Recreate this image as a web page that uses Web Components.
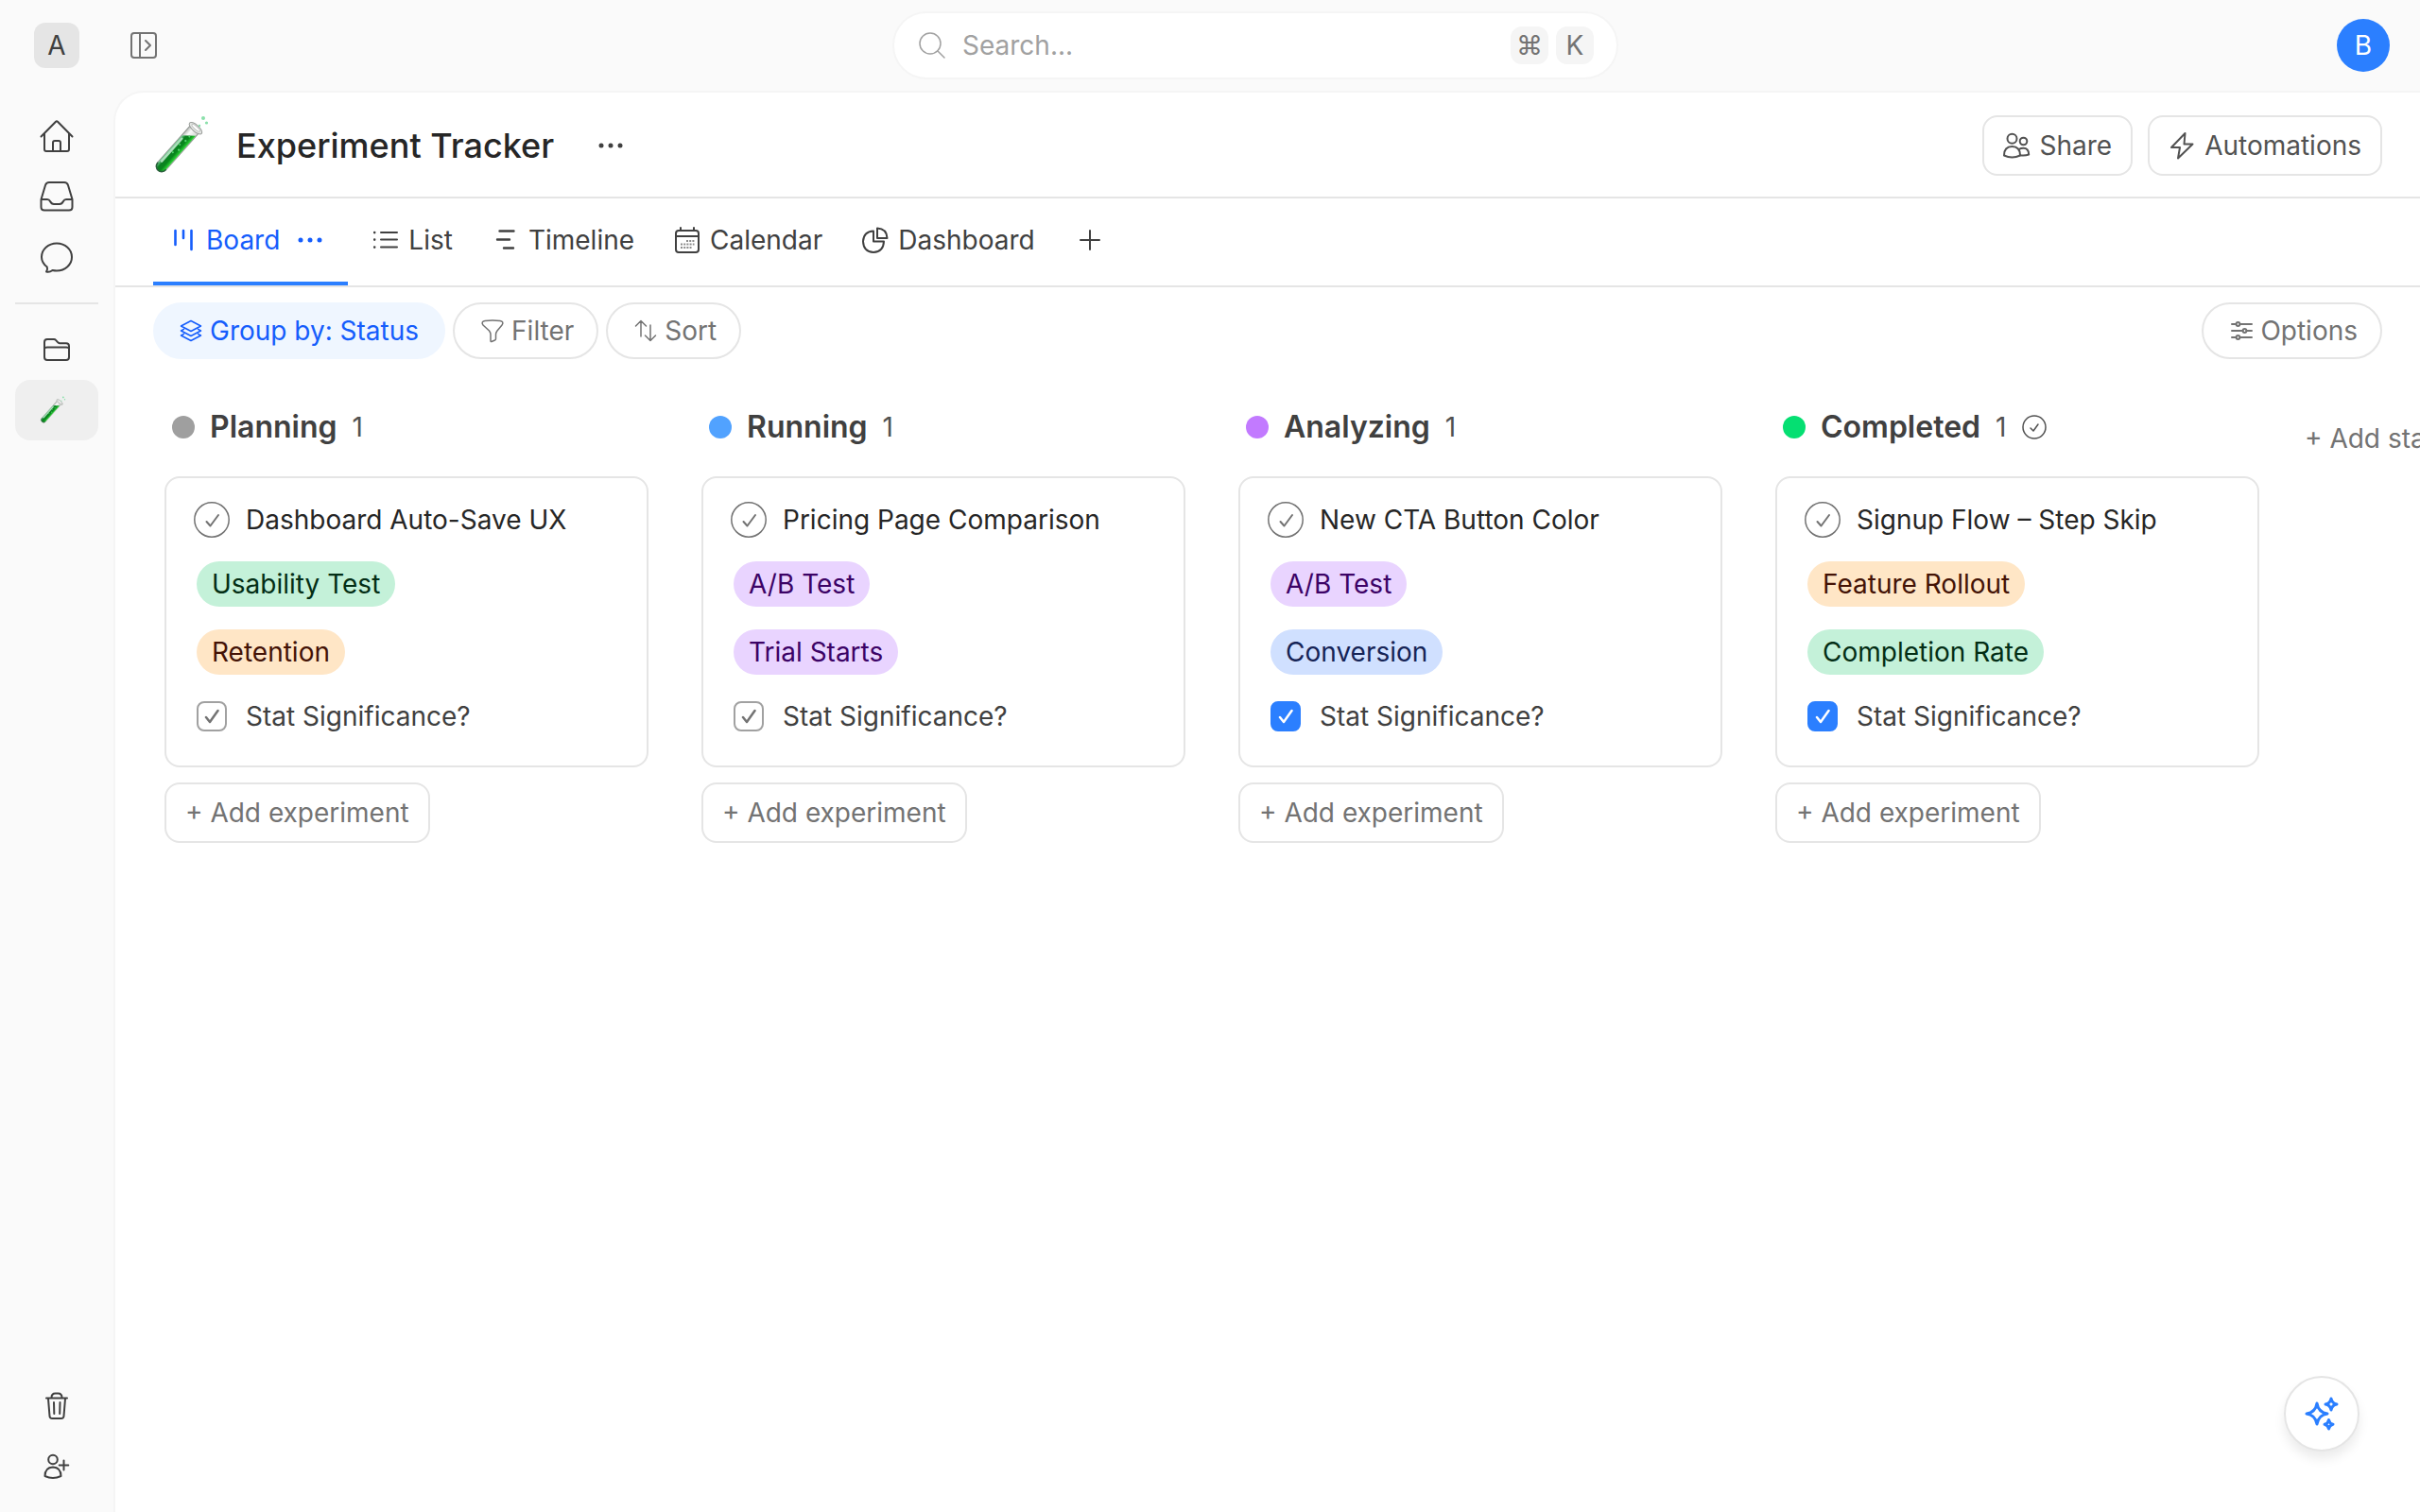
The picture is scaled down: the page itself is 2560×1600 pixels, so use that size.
<!DOCTYPE html>
<html lang="en">
<head>
<meta charset="UTF-8">
<meta name="viewport" content="width=device-width, initial-scale=1.0">
<title>Experiment Tracker</title>
<style>
    * {
        box-sizing: border-box;
    }
    body {
        margin: 0;
        background: #fafafa;
        color: #404040;
        font-family: Inter, "Liberation Sans", sans-serif;
        font-size: 28px;
        line-height: 40px;
    }
</style>
</head>
<body>
<app-shell>
    <top-bar slot="top"></top-bar>
    <side-nav slot="side"></side-nav>
    <page-header heading="Experiment Tracker"></page-header>
    <view-tabs></view-tabs>
    <board-toolbar></board-toolbar>
    <kanban-board>
        <board-column name="Planning" count="1" color="#9f9f9f">
            <experiment-card name="Dashboard Auto-Save UX">
                <tag-pill tone="green">Usability Test</tag-pill>
                <tag-pill tone="orange">Retention</tag-pill>
            </experiment-card>
        </board-column>
        <board-column name="Running" count="1" color="#51a2ff">
            <experiment-card name="Pricing Page Comparison">
                <tag-pill tone="purple">A/B Test</tag-pill>
                <tag-pill tone="purple">Trial Starts</tag-pill>
            </experiment-card>
        </board-column>
        <board-column name="Analyzing" count="1" color="#c27aff">
            <experiment-card name="New CTA Button Color" significant>
                <tag-pill tone="purple">A/B Test</tag-pill>
                <tag-pill tone="blue">Conversion</tag-pill>
            </experiment-card>
        </board-column>
        <board-column name="Completed" count="1" color="#05df72" done>
            <experiment-card name="Signup Flow – Step Skip" significant>
                <tag-pill tone="orange">Feature Rollout</tag-pill>
                <tag-pill tone="green">Completion Rate</tag-pill>
            </experiment-card>
        </board-column>
    </kanban-board>
    <assistant-button slot="float"></assistant-button>
</app-shell>

<script>
// [width, height, stroke width, markup]
const ICONS = {
    panel: [28, 28, 2, '<rect x="1" y="1" width="26" height="26" rx="3"/><path d="M10 1v26M16 9l5 5-5 5"/>'],
    search: [28, 28, 1.5, '<circle cx="12" cy="12" r="11"/><path d="M20 20l7 7"/>'],
    home: [36, 36, 2, '<path d="M1.500 18.500L17 2.800q1-1 2 0L34.500 18.500M5 15v17q0 2 2 2h22q2 0 2-2V15M14 34V25q0-2 2-2h4q2 0 2 2v9"/>'],
    inbox: [36, 36, 2, '<path d="M10 3h16q3 0 4 3l4.500 15v8q0 3.500-3.500 3.500H5Q1.500 32.500 1.500 29v-8L6 6q1-3 4-3zM1.500 21H8q2 0 3 2 1.500 3 4 3h6q2.500 0 4-3 1-2 3-2h6.500"/>'],
    chat: [36, 36, 2, '<path d="M18 3.500c9 0 16 6.500 16 14.500S27 32.500 18 32.500c-1.500 0-3-.2-4.500-.5-2 1.600-4.500 2-6.500 1.500 1-1.500 1.500-3 .8-5C4.300 25.800 2 22 2 18 2 10 9 3.500 18 3.500z"/>'],
    folder: [28, 28, 2, '<path d="M4 3h7q1.300 0 2 .9l2.500 2.700q.7.600 1.700.600H24q3 0 3 3V22q0 3-3 3H4q-3 0-3-3V6q0-3 3-3zM1 13q0-1.500 3-1.500h20q3 0 3 1.500"/>'],
    trash: [28, 32, 2, '<path d="M3 7.500h22M8.500 7q0-4.500 4-4.500h3q4 0 4 4.500M5 8l1.500 18.500q.2 2.500 2.700 2.500h9.600q2.500 0 2.700-2.500L23 8M11 12l.3 12M17.500 12l-.3 12"/>'],
    invite: [28, 28, 2, '<circle cx="10" cy="6.500" r="4.800"/><path d="M1.500 24q0-9 8.500-9.500 8.500.500 8.500 9.500-8.500 4-17 0zM21.500 7.500v10M16.700 12.500h9.600"/>'],
    dots: [28, 28, 0, '<g fill="currentColor"><circle cx="4" cy="14" r="2.500"/><circle cx="14" cy="14" r="2.500"/><circle cx="24" cy="14" r="2.500"/></g>'],
    people: [28, 28, 2, '<circle cx="9.500" cy="6.700" r="5"/><path d="M1 24.500q0-9.500 8.500-9.500t8.500 9.500q-8.500 4-17 0z"/><circle cx="21.500" cy="9.500" r="3.800"/><path d="M17 18q1.500-1.200 4.500-1.200 5.500 0 5.700 6.700-4 1.500-9.200.8"/>'],
    bolt: [28, 28, 2, '<path d="M17.500 1L3 16h9l-2 11.500L25.500 12.500H16.500z"/>'],
    board: [28, 28, 2.600, '<path d="M5.500 4v15M14 4v8M22.500 4v20"/>'],
    list: [28, 28, 2, '<path d="M9 6h17M9 13.500h17M9 21.500h17"/><path stroke-width="2.600" d="M2.200 6v.1M2.200 13.500v.1M2.200 21.500v.1"/>'],
    timeline: [28, 28, 2.400, '<path d="M7.500 4.500h15M5 13.500h13M12 22.500h10"/>'],
    calendar: [28, 28, 2, '<rect x="2" y="4" width="24" height="23" rx="3"/><path d="M2 10h24M7 1v3M21 1v3"/><path stroke-width="2" stroke-dasharray="2 1.200" stroke-linecap="butt" opacity=".6" d="M13 15h8.500M7 18.500h14.500M7 22h11.500"/>'],
    pie: [28, 28, 2, '<path d="M12 4.500v11h11q-.5 11-11 11.500Q1.500 26.500 1 15.500 1.500 5 12 4.500zM16 1.500v10.500h10.500q-.5-10-10.500-10.500z"/>'],
    plus: [28, 28, 2, '<path d="M14 4v20M4 14h20"/>'],
    layers: [24, 24, 1.500, '<path d="M12 1.500l10.500 5.500L12 12.500 1.500 7zM1.500 12l10.500 5.500L22.500 12l-3-1.600M4.500 10.400L1.500 12M1.500 17L12 22.500 22.500 17l-3-1.600M4.500 15.400L1.500 17"/>'],
    funnel: [24, 24, 1.500, '<path d="M4 1.500q8-1 16 0 4.500.8 2 4.500l-5 6q-1.500 2-1.500 4v4.500q0 1-1 1.500l-3.500 1.500q-1 .200-1-1V16q0-2-1.500-4L2 6Q-.5 2.300 4 1.500z"/>'],
    sort: [24, 24, 1.500, '<path d="M7 18V1.500M1.500 7L7 1.500 12.500 7M17 6v16.500M11.500 17l5.500 5.500 5.500-5.500"/>'],
    sliders: [24, 24, 2, '<path d="M2 5h4.500M10.500 5H23M2 12h11.500M17.500 12H23M2 19h4.500M10.500 19H23"/><circle cx="8.500" cy="5" r="1.900"/><circle cx="15.500" cy="12" r="1.900"/><circle cx="8.500" cy="19" r="1.900"/>'],
    done: [40, 40, 1.500, '<circle cx="20" cy="20" r="18.200"/><path stroke-width="2" d="M14.500 22l4 4.500L27 15"/>'],
    doneSmall: [28, 28, 1.500, '<circle cx="14" cy="14" r="12"/><path d="M10 15l3 3 5-7"/>'],
    tick: [32, 32, 2.500, '<path d="M10 17l4 5 8.500-12"/>'],
    sparkle: [40, 40, 3, '<path d="M15 9q1.500 9.500 11 11-9.500 1.500-11 11-1.500-9.500-11-11 9.500-1.500 11-11zM30 4q1 5.200 6 6-5 .8-6 6-1-5.200-6-6 5-.8 6-6zM27.500 26.500q.7 4 4.500 4.700-3.800.7-4.500 4.800-.7-4.100-4.500-4.800 3.800-.7 4.500-4.700z"/>'],
    tube: [64, 64, 1, `
        <defs>
            <linearGradient id="fluid"><stop offset="0" stop-color="#73cf94"/><stop offset=".3" stop-color="#0b7f22"/><stop offset=".65" stop-color="#08871d"/><stop offset="1" stop-color="#2ed836"/></linearGradient>
            <linearGradient id="glass"><stop offset="0" stop-color="#b9bdb9"/><stop offset=".35" stop-color="#fafafa"/><stop offset="1" stop-color="#d2d5d2"/></linearGradient>
        </defs>
        <g transform="translate(9 54) rotate(41.700)">
            <path d="M-6-54V0A6 6 0 0 0 6 0V-54z" fill="url(#glass)" stroke="#8f9590"/>
            <path d="M-5.500-39L5.500-48V0A5.500 5.500 0 0 1-5.500 0z" fill="url(#fluid)" stroke="none"/>
            <path d="M-3.500-36V-4" stroke="#c9efd5" stroke-width="2.500" opacity=".8"/>
            <path d="M-5.500 0A5.500 5.500 0 0 0 5.500 0" stroke="#27633a" stroke-width="1.500"/>
            <ellipse cx="0" cy="-54" rx="8.500" ry="3.500" fill="#e4e6e4" stroke="#9a9d9a"/>
            <ellipse cx="0" cy="-54.500" rx="5.500" ry="1.600" fill="#fff" stroke="#bfc2bf"/>
            <g fill="#53d36c" stroke="none"><circle cx="1" cy="-37" r="1.200"/><circle cx="-1" cy="-30" r="1"/><circle cx="2" cy="-25" r="1.200"/><circle cx="-1" cy="-19" r="1"/><circle cx="1" cy="-43" r="1"/></g>
        </g>
        <g fill="#8be0ab" stroke="none"><circle cx="53" cy="3" r="2"/><circle cx="56.500" cy="8" r="1.600"/><circle cx="49" cy="11" r="1.200"/></g>`]
};

const BUTTON_RESET = `
    * { box-sizing: border-box; }
    button {
        display: flex;
        align-items: center;
        justify-content: center;
        margin: 0;
        padding: 0;
        border: 0;
        background: none;
        color: inherit;
        font: inherit;
        cursor: pointer;
        white-space: nowrap;
    }
`;

function define(name, render) {
    customElements.define(name, class extends HTMLElement {
        connectedCallback() {
            if (this.shadowRoot) return;
            this.attachShadow({ mode: 'open' });
            this.shadowRoot.innerHTML = render(this);
        }
    });
}

define('ui-icon', (el) => {
    const [w, h, stroke, markup] = ICONS[el.getAttribute('name')];
    const size = Number(el.getAttribute('size')) || w;
    return `
        <style>
            :host { display: block; flex: none; }
            svg { display: block; overflow: visible; }
        </style>
        <svg width="${size}" height="${size * h / w}" viewBox="0 0 ${w} ${h}" fill="none" stroke="currentColor" stroke-width="${stroke}" stroke-linecap="round" stroke-linejoin="round" aria-hidden="true">${markup}</svg>
    `;
});

define('app-shell', () => `
    <style>
        * { box-sizing: border-box; }
        :host {
            display: grid;
            grid-template-columns: 120px minmax(0, 1fr);
            grid-template-rows: 96px 1fr;
            height: 100vh;
            overflow: hidden;
        }
        header { grid-column: 1 / -1; }
        aside { display: flex; }
        main {
            background: #fff;
            border: 2px solid #f5f5f5;
            border-width: 2px 0 0 2px;
            border-top-left-radius: 32px;
            overflow: hidden;
        }
        ::slotted(side-nav) { flex: 1; }
    </style>
    <header><slot name="top"></slot></header>
    <aside><slot name="side"></slot></aside>
    <main><slot></slot></main>
    <slot name="float"></slot>
`);

define('top-bar', () => `
    <style>
        ${BUTTON_RESET}
        :host {
            display: flex;
            align-items: center;
            justify-content: space-between;
            height: 96px;
            padding-right: 32px;
        }
        .left { display: flex; align-items: center; }
        .workspace {
            width: 48px;
            height: 48px;
            margin: 0 36px;
            border-radius: 12px;
            background: #e5e5e5;
        }
        .toggle { width: 64px; height: 64px; color: #737373; }
        .search {
            display: flex;
            align-items: center;
            gap: 8px;
            width: 30vw;
            height: 72px;
            padding: 0 24px 0 26px;
            border: 2px solid #f5f5f5;
            border-radius: 36px;
            background: #fff;
            color: #a1a1a1;
        }
        input {
            flex: 1;
            min-width: 0;
            margin-left: 10px;
            padding: 0;
            border: 0;
            outline: 0;
            background: none;
            color: #404040;
            font: inherit;
        }
        input::placeholder { color: #a1a1a1; opacity: 1; }
        kbd {
            width: 40px;
            height: 40px;
            border-radius: 12px;
            background: #f5f5f5;
            color: #737373;
            font-family: inherit;
            text-align: center;
        }
        .avatar {
            width: 56px;
            height: 56px;
            border-radius: 50%;
            background: #2b7fff;
            color: #fff;
        }
    </style>
    <div class="left">
        <button class="workspace">A</button>
        <button class="toggle" aria-label="Expand sidebar"><ui-icon name="panel"></ui-icon></button>
    </div>
    <label class="search">
        <ui-icon name="search"></ui-icon>
        <input type="text" placeholder="Search..." aria-label="Search">
        <kbd>⌘</kbd>
        <kbd>K</kbd>
    </label>
    <button class="avatar">B</button>
`);

define('side-nav', () => `
    <style>
        * { box-sizing: border-box; }
        :host {
            display: flex;
            flex-direction: column;
            padding: 16px;
        }
        nav { display: flex; flex-direction: column; }
        nav:last-child { margin-top: auto; }
        a {
            display: flex;
            align-items: center;
            justify-content: center;
            height: 64px;
            border-radius: 16px;
            color: #404040;
        }
        a.active {
            justify-content: flex-start;
            padding-left: 26px;
            background: #efefef;
        }
        hr {
            width: 100%;
            margin: 16px 0;
            border: 0;
            border-top: 2px solid #e5e5e5;
        }
    </style>
    <nav>
        <a href="#home" aria-label="Home"><ui-icon name="home"></ui-icon></a>
        <a href="#inbox" aria-label="Inbox"><ui-icon name="inbox"></ui-icon></a>
        <a href="#chat" aria-label="Chat"><ui-icon name="chat"></ui-icon></a>
    </nav>
    <hr>
    <nav>
        <a href="#projects" aria-label="Projects"><ui-icon name="folder"></ui-icon></a>
        <a href="#tracker" class="active" aria-label="Experiment Tracker"><ui-icon name="tube" size="30"></ui-icon></a>
    </nav>
    <nav>
        <a href="#trash" aria-label="Trash"><ui-icon name="trash"></ui-icon></a>
        <a href="#invite" aria-label="Invite"><ui-icon name="invite"></ui-icon></a>
    </nav>
`);

define('page-header', (el) => `
    <style>
        ${BUTTON_RESET}
        :host {
            display: flex;
            align-items: center;
            padding: 24px 40px 22px;
            border-bottom: 2px solid #e5e5e5;
        }
        h1 {
            margin: 0 32px 0 24px;
            color: #262626;
            font-size: 36px;
            font-weight: 500;
        }
        .more { width: 56px; height: 56px; }
        .actions { display: flex; gap: 16px; margin-left: auto; }
        .actions button {
            gap: 10px;
            height: 64px;
            padding: 0 20px;
            border: 2px solid #e5e5e5;
            border-radius: 16px;
            color: #525252;
        }
    </style>
    <ui-icon name="tube"></ui-icon>
    <h1>${el.getAttribute('heading')}</h1>
    <button class="more" aria-label="More"><ui-icon name="dots"></ui-icon></button>
    <div class="actions">
        <button><ui-icon name="people"></ui-icon>Share</button>
        <button><ui-icon name="bolt"></ui-icon>Automations</button>
    </div>
`);

define('view-tabs', () => {
    const tabs = [['board', 'Board'], ['list', 'List'], ['timeline', 'Timeline'], ['calendar', 'Calendar'], ['pie', 'Dashboard']];
    return `
        <style>
            ${BUTTON_RESET}
            :host {
                display: flex;
                gap: 8px;
                height: 94px;
                padding: 0 40px;
                border-bottom: 2px solid #e5e5e5;
            }
            .tab {
                display: flex;
                align-items: center;
                gap: 8px;
                padding: 0 16px 0 18px;
                border-bottom: 4px solid transparent;
            }
            .active { border-color: #2b7fff; color: #155dfc; }
            a {
                display: flex;
                align-items: center;
                gap: 10px;
                color: inherit;
                text-decoration: none;
            }
            .more { width: 48px; height: 48px; }
            .add { width: 68px; border-bottom: 4px solid transparent; }
        </style>
        ${tabs.map(([icon, label], i) => `
            <div class="tab${i === 0 ? ' active' : ''}">
                <a href="#${icon}"><ui-icon name="${icon}"></ui-icon>${label}</a>
                ${i === 0 ? '<button class="more" aria-label="View options"><ui-icon name="dots"></ui-icon></button>' : ''}
            </div>
        `).join('')}
        <button class="add" aria-label="Add view"><ui-icon name="plus"></ui-icon></button>
    `;
});

define('board-toolbar', () => `
    <style>
        ${BUTTON_RESET}
        :host {
            display: flex;
            gap: 8px;
            padding: 16px 40px 52px;
        }
        button {
            gap: 8px;
            height: 60px;
            padding: 0 24px 0 28px;
            border: 2px solid #e5e5e5;
            border-radius: 30px;
            color: #737373;
        }
        .group {
            padding: 0 26px;
            border-color: #eff6ff;
            background: #eff6ff;
            color: #155dfc;
        }
        .options { margin-left: auto; }
    </style>
    <button class="group"><ui-icon name="layers"></ui-icon>Group by: Status</button>
    <button><ui-icon name="funnel"></ui-icon>Filter</button>
    <button><ui-icon name="sort"></ui-icon>Sort</button>
    <button class="options"><ui-icon name="sliders"></ui-icon>Options</button>
`);

define('kanban-board', () => `
    <style>
        ${BUTTON_RESET}
        :host {
            display: flex;
            align-items: flex-start;
            gap: 40px;
            padding-left: 44px;
        }
        ::slotted(board-column) { margin: 0 8px; }
        button { height: 64px; color: #737373; }
    </style>
    <slot></slot>
    <button>+ Add status</button>
`);

define('board-column', (el) => `
    <style>
        ${BUTTON_RESET}
        :host {
            display: flex;
            flex: none;
            flex-direction: column;
            align-items: flex-start;
            width: 512px;
        }
        header {
            display: flex;
            align-items: center;
            gap: 16px;
            margin-bottom: 32px;
            padding-left: 8px;
        }
        .dot {
            width: 24px;
            height: 24px;
            border-radius: 50%;
            background: ${el.getAttribute('color')};
        }
        h2 { margin: 0; font-size: 32px; font-weight: 600; }
        header ui-icon, .count { color: #525252; }
        ::slotted(*) { align-self: stretch; }
        button {
            height: 64px;
            margin-top: 16px;
            padding: 0 20px;
            border: 2px solid #e5e5e5;
            border-radius: 16px;
            color: #737373;
        }
    </style>
    <header>
        <span class="dot"></span>
        <h2>${el.getAttribute('name')}</h2>
        <span class="count">${el.getAttribute('count')}</span>
        ${el.hasAttribute('done') ? '<ui-icon name="doneSmall"></ui-icon>' : ''}
    </header>
    <slot></slot>
    <button>+ Add experiment</button>
`);

define('experiment-card', (el) => `
    <style>
        ${BUTTON_RESET}
        :host {
            display: flex;
            flex-direction: column;
            gap: 24px;
            box-sizing: border-box;
            padding: 24px 28px 32px;
            border: 2px solid #e5e5e5;
            border-radius: 16px;
            background: #fff;
        }
        .row { display: flex; align-items: center; gap: 16px; }
        h3 {
            margin: 0;
            color: #262626;
            font-size: 28px;
            font-weight: 400;
        }
        .complete { color: #737373; }
        .box {
            display: grid;
            margin: 4px;
            color: #737373;
        }
        .box > * { grid-area: 1 / 1; }
        .box ui-icon { pointer-events: none; }
        input {
            appearance: none;
            width: 32px;
            height: 32px;
            margin: 0;
            border: 2px solid #a1a1a1;
            border-radius: 8px;
            background: #fff;
        }
        input:checked { border-color: #2b7fff; background: #2b7fff; }
        input:checked + ui-icon { color: #fff; }
    </style>
    <div class="row">
        <button class="complete" aria-label="Mark complete"><ui-icon name="done"></ui-icon></button>
        <h3>${el.getAttribute('name')}</h3>
    </div>
    <slot></slot>
    <label class="row">
        <span class="box">
            <input type="checkbox"${el.hasAttribute('significant') ? ' checked' : ''}>
            <ui-icon name="tick"></ui-icon>
        </span>
        Stat Significance?
    </label>
`);

define('tag-pill', () => `
    <style>
        :host {
            align-self: flex-start;
            margin-left: 4px;
            padding: 4px 16px;
            border-radius: 24px;
        }
        :host([tone="green"]) { background: #c4f1d9; color: #032e15; }
        :host([tone="orange"]) { background: #ffe6c6; color: #441306; }
        :host([tone="purple"]) { background: #e9d4ff; color: #3c0366; }
        :host([tone="blue"]) { background: #d0e0ff; color: #162456; }
    </style>
    <slot></slot>
`);

define('assistant-button', () => `
    <style>
        ${BUTTON_RESET}
        :host { position: fixed; right: 64px; bottom: 64px; }
        button {
            width: 80px;
            height: 80px;
            border: 2px solid #e5e5e5;
            border-radius: 50%;
            background: #fff;
            box-shadow: 0 8px 12px rgba(0, 0, 0, .08);
            color: #2b7fff;
        }
    </style>
    <button aria-label="Ask assistant"><ui-icon name="sparkle"></ui-icon></button>
`);
</script>
</body>
</html>
